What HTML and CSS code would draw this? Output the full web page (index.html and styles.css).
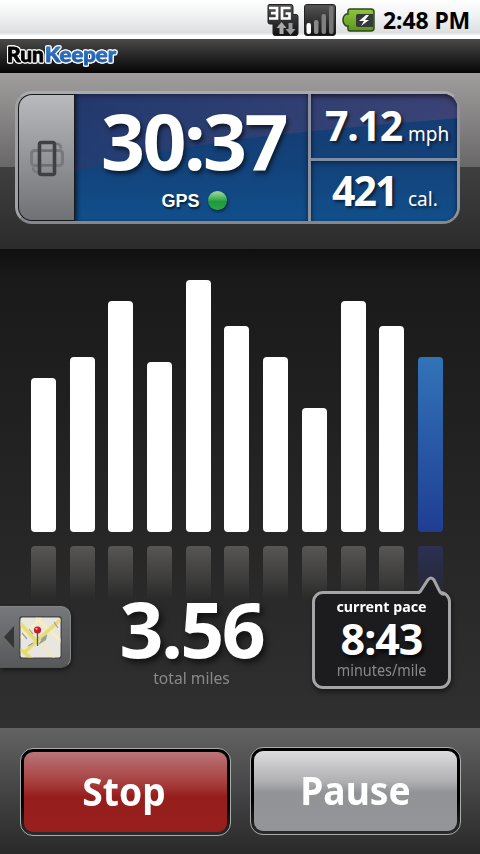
FILE: index.html
```html
<!DOCTYPE html>
<html lang="en">

<head>
    <meta charset="UTF-8">
    <meta name="viewport" content="width=device-width, initial-scale=1.0">
    <title>RunKeeper</title>
    <link rel="stylesheet" href="styles.css">
</head>

<body>
    <!-- Status bar -->
    <div class="status-bar">
        <svg class="icon-3g" width="34" height="34" viewBox="0 0 34 34">
            <defs>
                <linearGradient id="dark" x1="0" y1="0" x2="0" y2="1">
                    <stop offset="0" stop-color="#555" />
                    <stop offset="1" stop-color="#111" />
                </linearGradient>
            </defs>
            <path d="M3 1.500h22q2 0 2 2v8h3q2 0 2 2v17q0 2-2 2H9q-2 0-2-2V21H4q-2 0-2-2V3.500q0-2 1-2z" fill="url(#dark)" stroke="#222" />
            <path d="M3 5h8v10.500H3M5 10.200h6M24.500 5H16v10.500h7.500v-5H19.500" fill="none" stroke="#fff" stroke-width="2.700" />
            <path d="M15.500 19l5 6h-3v6h-4v-6h-3z" fill="#aaa" />
            <path d="M24.500 32l-5-6h3v-6h4v6h3z" fill="#999" />
        </svg>
        <svg class="icon-signal" width="32" height="32" viewBox="0 0 32 32">
            <rect x=".5" y=".5" width="31" height="31" rx="2.500" fill="url(#dark)" stroke="#222" />
            <rect x="2.500" y="19" width="4.500" height="11" rx="2" fill="#fff" />
            <rect x="10" y="16" width="4.500" height="14" rx="2" fill="#888" />
            <rect x="17.500" y="10" width="4.500" height="20" rx="2" fill="#808080" />
            <rect x="25" y="2" width="4.500" height="28" rx="2" fill="#777" />
        </svg>
        <svg class="icon-battery" width="33" height="24" viewBox="0 0 33 24">
            <defs>
                <linearGradient id="green" x1="0" y1="0" x2="0" y2="1">
                    <stop offset="0" stop-color="#8fc63d" />
                    <stop offset="1" stop-color="#5d9420" />
                </linearGradient>
            </defs>
            <path d="M8 1h21q3 0 3 3v16q0 3-3 3H8q-2 0-2-2v-3H4q-3-2-3-6t3-6h2V3q0-2 2-2z" fill="url(#green)" stroke="#2c471a" stroke-width="1.500" />
            <path d="M16 6h15v13H16q-2 0-2-2V8q0-2 2-2z" fill="#343a35" />
            <path d="M24 7l-7 6h5l-3 5 8-6h-4l4-5z" fill="#fff" />
        </svg>
        <span class="clock">2:48 PM</span>
    </div>

    <!-- App title -->
    <div class="app-header">
        <svg width="116" height="28" viewBox="0 0 116 28">
            <defs>
                <linearGradient id="logoBlue" x1="0" y1="0" x2="0" y2="1">
                    <stop offset="0" stop-color="#3d8fdc" />
                    <stop offset="1" stop-color="#1a4f9c" />
                </linearGradient>
            </defs>
            <g class="logo-text">
                <text x="2" y="18.500" textLength="37" lengthAdjust="spacingAndGlyphs" fill="#000" stroke="#000">Run</text>
                <text x="40" y="18.500" textLength="71" lengthAdjust="spacingAndGlyphs" fill="url(#logoBlue)" stroke="#2c6fbc">Keeper</text>
            </g>
        </svg>
    </div>

    <!-- Workout stats -->
    <div class="top-panel">
        <div class="stats">
            <div class="rotate-tab">
                <svg width="36" height="38" viewBox="0 0 36 38">
                    <rect x="2.500" y="11.500" width="31" height="15" rx="3" fill="none" stroke="#77797c" stroke-width="3" />
                    <path d="M26 4.500q6 0 6 5M10 33.500q-6 0-6-5" fill="none" stroke="#77797c" stroke-width="2.500" />
                    <rect x="10.500" y="3.500" width="15" height="32" rx="2" fill="none" stroke="#3e4043" stroke-width="3.600" />
                    <path d="M12 12h12M12 26h12" stroke="#6b6d70" stroke-width="2" />
                </svg>
            </div>
            <div class="screen">
                <div class="time-cell">
                    <div class="time">30:37</div>
                    <div class="gps">GPS <span class="gps-light"></span></div>
                </div>
                <div class="side-cells">
                    <div class="cell"><span class="speed">7.12</span><span class="unit">mph</span></div>
                    <div class="cell cell-cal"><span class="calories">421</span><span class="unit">cal.</span></div>
                </div>
            </div>
        </div>
    </div>

    <div class="main">
        <!-- Pace chart -->
        <div class="chart">
            <div class="bar" style="height: 154px"></div>
            <div class="bar" style="height: 175px"></div>
            <div class="bar" style="height: 231px"></div>
            <div class="bar" style="height: 170px"></div>
            <div class="bar" style="height: 252px"></div>
            <div class="bar" style="height: 206px"></div>
            <div class="bar" style="height: 175px"></div>
            <div class="bar" style="height: 124px"></div>
            <div class="bar" style="height: 231px"></div>
            <div class="bar" style="height: 206px"></div>
            <div class="bar current" style="height: 175px"></div>
        </div>
        <div class="reflections">
            <i></i><i></i><i></i><i></i><i></i><i></i><i></i><i></i><i></i><i></i><i class="current"></i>
        </div>

        <div class="summary">
            <div class="map-tab">
                <svg class="arrow" width="10" height="22" viewBox="0 0 10 22">
                    <path d="M10 0v22L0 11z" fill="#363638" />
                </svg>
                <svg class="map" width="43" height="43" viewBox="0 0 43 43">
                    <defs>
                        <clipPath id="mapClip">
                            <rect x="1.500" y="1.500" width="40" height="40" rx="2" />
                        </clipPath>
                    </defs>
                    <rect x="0" y="0" width="43" height="43" rx="3" fill="#4c4c4e" />
                    <g clip-path="url(#mapClip)">
                        <rect width="43" height="43" fill="#e9e6e0" />
                        <path d="M2 22L22 2M17 2l26 24" fill="none" stroke="#f4eec0" stroke-width="3" />
                        <path d="M6 36L42 3M0 6l18 20M1 33l12 10" fill="none" stroke="#e6dd6c" stroke-width="3.500" />
                        <path d="M21 24l14 18" fill="none" stroke="#f1eab0" stroke-width="2" />
                        <path d="M22 24l6-5M3 17l5 6M10 13l4 5M35 6l4 6M9 30l5-3" stroke="#92a0b5" stroke-width="1.200" />
                        <path d="M19 29l5-8 4-1-1 4z" fill="#9aa18e" />
                        <path d="M18.500 16v14" stroke="#555" stroke-width="1.300" />
                        <circle cx="18.500" cy="14" r="3.600" fill="#c71f23" />
                        <circle cx="17.500" cy="12.800" r="1.100" fill="#f3a5a0" />
                    </g>
                </svg>
            </div>
            <div class="distance">
                <div class="miles">3.56</div>
                <div class="label">total miles</div>
            </div>
            <div class="pace">
                <svg class="pointer" width="28" height="20" viewBox="0 0 28 20">
                    <path d="M2 20L3 17.500 11.500 3.500Q14 .5 16.500 3.500L23.500 17l3 3z" fill="#1c1c1e" />
                    <path d="M0 16.500q3 0 4-2L10.800 4Q14 0 17 4l5.500 11q1 2.500 4.500 3.500" fill="none" stroke="#a5a5a8" stroke-width="3" />
                </svg>
                <div class="pace-title">current pace</div>
                <div class="pace-value">8:43</div>
                <div class="label pace-label">minutes/mile</div>
            </div>
        </div>
    </div>

    <!-- Controls -->
    <div class="footer">
        <button class="stop"><span><b>Stop</b></span></button>
        <button class="pause"><span><b>Pause</b></span></button>
    </div>
</body>

</html>
```
FILE: styles.css
```css
* {
    box-sizing: border-box;
}

body {
    margin: 0;
    width: 480px;
    height: 854px;
    overflow: hidden;
    display: flex;
    flex-direction: column;
    background: #222;
    color: #fff;
    font-family: "Noto Sans", "Open Sans", sans-serif;
    font-weight: bold;
}

.status-bar {
    height: 39px;
    display: flex;
    justify-content: flex-end;
    align-items: center;
    padding-right: 10px;
    background: linear-gradient(#fff, #f1f2f3 40%, #dcdee0 84%, #fff 92%);
}

.icon-3g {
    margin-right: 4px;
}

.icon-signal {
    margin-right: 6px;
}

.icon-battery {
    margin-right: 8px;
}

.clock {
    color: #000;
    font-size: 23px;
    line-height: 40px;
    width: 87px;
    white-space: nowrap;
    letter-spacing: -0.100px;
}

.app-header {
    height: 34px;
    padding: 4px 0 0 5px;
    background: linear-gradient(#4a4a4a, #262626 50%, #050505);
}

.logo-text {
    font-family: Lato, "DejaVu Sans", sans-serif;
    font-weight: 900;
    font-size: 20px;
    stroke-width: 0.800px;
    stroke-linejoin: round;
    filter: drop-shadow(1px 0 0 #fff) drop-shadow(-1px 0 0 #fff) drop-shadow(0 1px 0 #fff) drop-shadow(0 -1px 0 #fff);
}

.top-panel {
    height: 176px;
    padding: 18px 20px 0 15px;
    background: linear-gradient(#a09d9d, #696868 94px, #3f3f3f 94px, #2c2c2c);
}

.stats {
    width: 445px;
    height: 133px;
    display: flex;
    border: 3px solid;
    border-color: #a9aaaf #8f9299 #85878c #a0a1a5;
    border-radius: 17px;
    background: #17181a;
}

.rotate-tab {
    width: 55px;
    margin: 1px 0 1px 1px;
    display: flex;
    align-items: center;
    justify-content: center;
    border-radius: 13px 0 0 13px;
    background: linear-gradient(#b9babd, #8f9194 55%, #6f7174);
}

.screen {
    flex: 1;
    margin-left: 1px;
    display: flex;
    position: relative;
    border-radius: 0 14px 14px 0;
    background: linear-gradient(#163a70, #13427a 55%, #114f8b);
    box-shadow: inset 0 3px 5px rgba(0, 0, 0, 0.45);
}

/* glass highlight */
.screen::before {
    content: "";
    position: absolute;
    inset: 0;
    border-radius: 0 14px 0 0;
    background: linear-gradient(100deg, rgba(50, 55, 105, 0.45), rgba(92, 74, 120, 0.55));
    clip-path: polygon(0 0, 100% 0, 100% 19%, 80% 24%, 61% 29.500%, 43% 35.500%, 20% 47%, 0 61%);
}

.time-cell {
    width: 236px;
    position: relative;
    border-right: 3px solid #8b93a3;
    box-shadow: inset 4px 0 4px -2px rgba(0, 0, 0, 0.4), inset -4px 0 4px -3px rgba(0, 0, 0, 0.4);
    text-align: center;
}

.time {
    height: 93px;
    line-height: 93px;
    font-size: 77px;
    letter-spacing: -2.600px;
    padding-left: 4px;
    text-shadow: 2px 3px 4px rgba(0, 0, 0, 0.6);
}

.gps {
    display: flex;
    align-items: center;
    justify-content: center;
    gap: 8px;
    height: 27px;
    font: bold 18px/26px "Liberation Sans", Arial, sans-serif;
    text-shadow: 1px 2px 2px rgba(0, 0, 0, 0.6);
    padding-left: 5px;
}

.gps-light {
    width: 19px;
    height: 19px;
    border-radius: 50%;
    background: linear-gradient(#a5dca5, #3cae50 45%, #1d9a3b 55%, #2aa746);
    box-shadow: 1px 2px 3px rgba(0, 0, 0, 0.5);
}

.side-cells {
    flex: 1;
    position: relative;
}

.cell {
    height: 67px;
    display: flex;
    align-items: baseline;
    padding-left: 14px;
    line-height: 63px;
    border-bottom: 3px solid #7d8da3;
    border-top-right-radius: 14px;
    box-shadow: inset 0 4px 5px -2px rgba(0, 0, 0, 0.4), inset 4px 0 4px -3px rgba(0, 0, 0, 0.4);
    text-shadow: 2px 2px 3px rgba(0, 0, 0, 0.6);
}

.cell-cal {
    height: 60px;
    line-height: 59px;
    padding-left: 21px;
    border-bottom: none;
    border-radius: 0 0 14px 0;
}

.speed,
.calories {
    font-size: 41px;
    letter-spacing: -1.200px;
    width: 83px;
    white-space: nowrap;
}

.calories {
    width: 76px;
    letter-spacing: -2px;
}

.unit {
    font-size: 19px;
    font-weight: normal;
}

.main {
    height: 479px;
    background: linear-gradient(#0f0f10, #1a1a1b 30px, #222 200px, #303030);
}

.chart {
    height: 283px;
    padding: 0 37px 0 31px;
    display: flex;
    align-items: flex-end;
    justify-content: space-between;
}

.bar {
    width: 25px;
    border-radius: 4px;
    background: #fff;
}

.bar.current {
    background: linear-gradient(#3273b8, #1f3e93);
}

.reflections {
    height: 54px;
    margin-top: 14px;
    padding: 0 37px 0 31px;
    display: flex;
    justify-content: space-between;
}

.reflections i {
    width: 25px;
    border-radius: 4px 4px 0 0;
    background: linear-gradient(#575654, rgba(70, 69, 68, 0.7) 60%, rgba(50, 50, 50, 0));
}

.reflections .current {
    background: linear-gradient(#2c3052, rgba(40, 43, 75, 0.6) 60%, rgba(40, 40, 60, 0));
}

.summary {
    display: flex;
    margin-top: -9px;
}

.map-tab {
    width: 71px;
    height: 62px;
    margin-top: 15px;
    display: flex;
    align-items: center;
    padding-left: 4px;
    gap: 5px;
    border: 1px solid #858588;
    border-left: none;
    border-bottom-color: #555;
    border-radius: 0 10px 10px 0;
    background: linear-gradient(#77787b, #57585a);
    box-shadow: 1px 2px 4px rgba(0, 0, 0, 0.5);
}

.distance {
    width: 241px;
    text-align: center;
}

.miles {
    height: 76px;
    line-height: 75px;
    font-size: 77px;
    letter-spacing: -2.500px;
    text-shadow: 3px 4px 6px rgba(0, 0, 0, 0.6);
}

.label {
    color: #89898a;
    font-size: 17px;
    line-height: 22px;
    font-weight: normal;
    transform: scaleX(0.92);
}

.pace {
    width: 139px;
    height: 98px;
    position: relative;
    border: 3px solid #a5a5a8;
    border-radius: 11px;
    background: #1c1c1e;
    text-align: center;
    box-shadow: 1px 3px 5px rgba(0, 0, 0, 0.5);
}

.pointer {
    position: absolute;
    top: -18px;
    right: 3px;
}

.pace-title {
    font-size: 15px;
    line-height: 25px;
    transform: scaleX(0.95);
}

.pace-value {
    font-size: 43px;
    line-height: 39px;
    letter-spacing: -1px;
    text-shadow: 2px 3px 4px rgba(0, 0, 0, 0.8);
}

.pace-label {
    font-size: 16px;
    line-height: 25px;
    transform: scaleX(0.9);
}

.footer {
    height: 126px;
    padding: 19px 19px 0 20px;
    display: flex;
    justify-content: space-between;
    align-items: flex-start;
    background: linear-gradient(#636363, #444 50%, #292929);
}

button {
    width: 211px;
    height: 88px;
    padding: 3px;
    border: 1px solid #a9abad;
    border-radius: 13px;
    background: linear-gradient(#000 60%, #2c2c2c);
    color: #fff;
    font-family: inherit;
    font-size: 40px;
}

button span {
    display: block;
    height: 80px;
    line-height: 77px;
    border-radius: 9px;
}

button b {
    display: block;
    font-weight: 700;
    transform: scaleX(0.93);
}

.stop {
    margin-top: 1px;
}

.stop span {
    background: linear-gradient(#b97579, #a63c3b 40%, #951e1d 56%, #981f1e);
}

.stop b {
    margin-left: -3px;
}

.pause span {
    background: linear-gradient(#dcdcde, #b0b0b4 38%, #929397 52%, #949598);
}
```
